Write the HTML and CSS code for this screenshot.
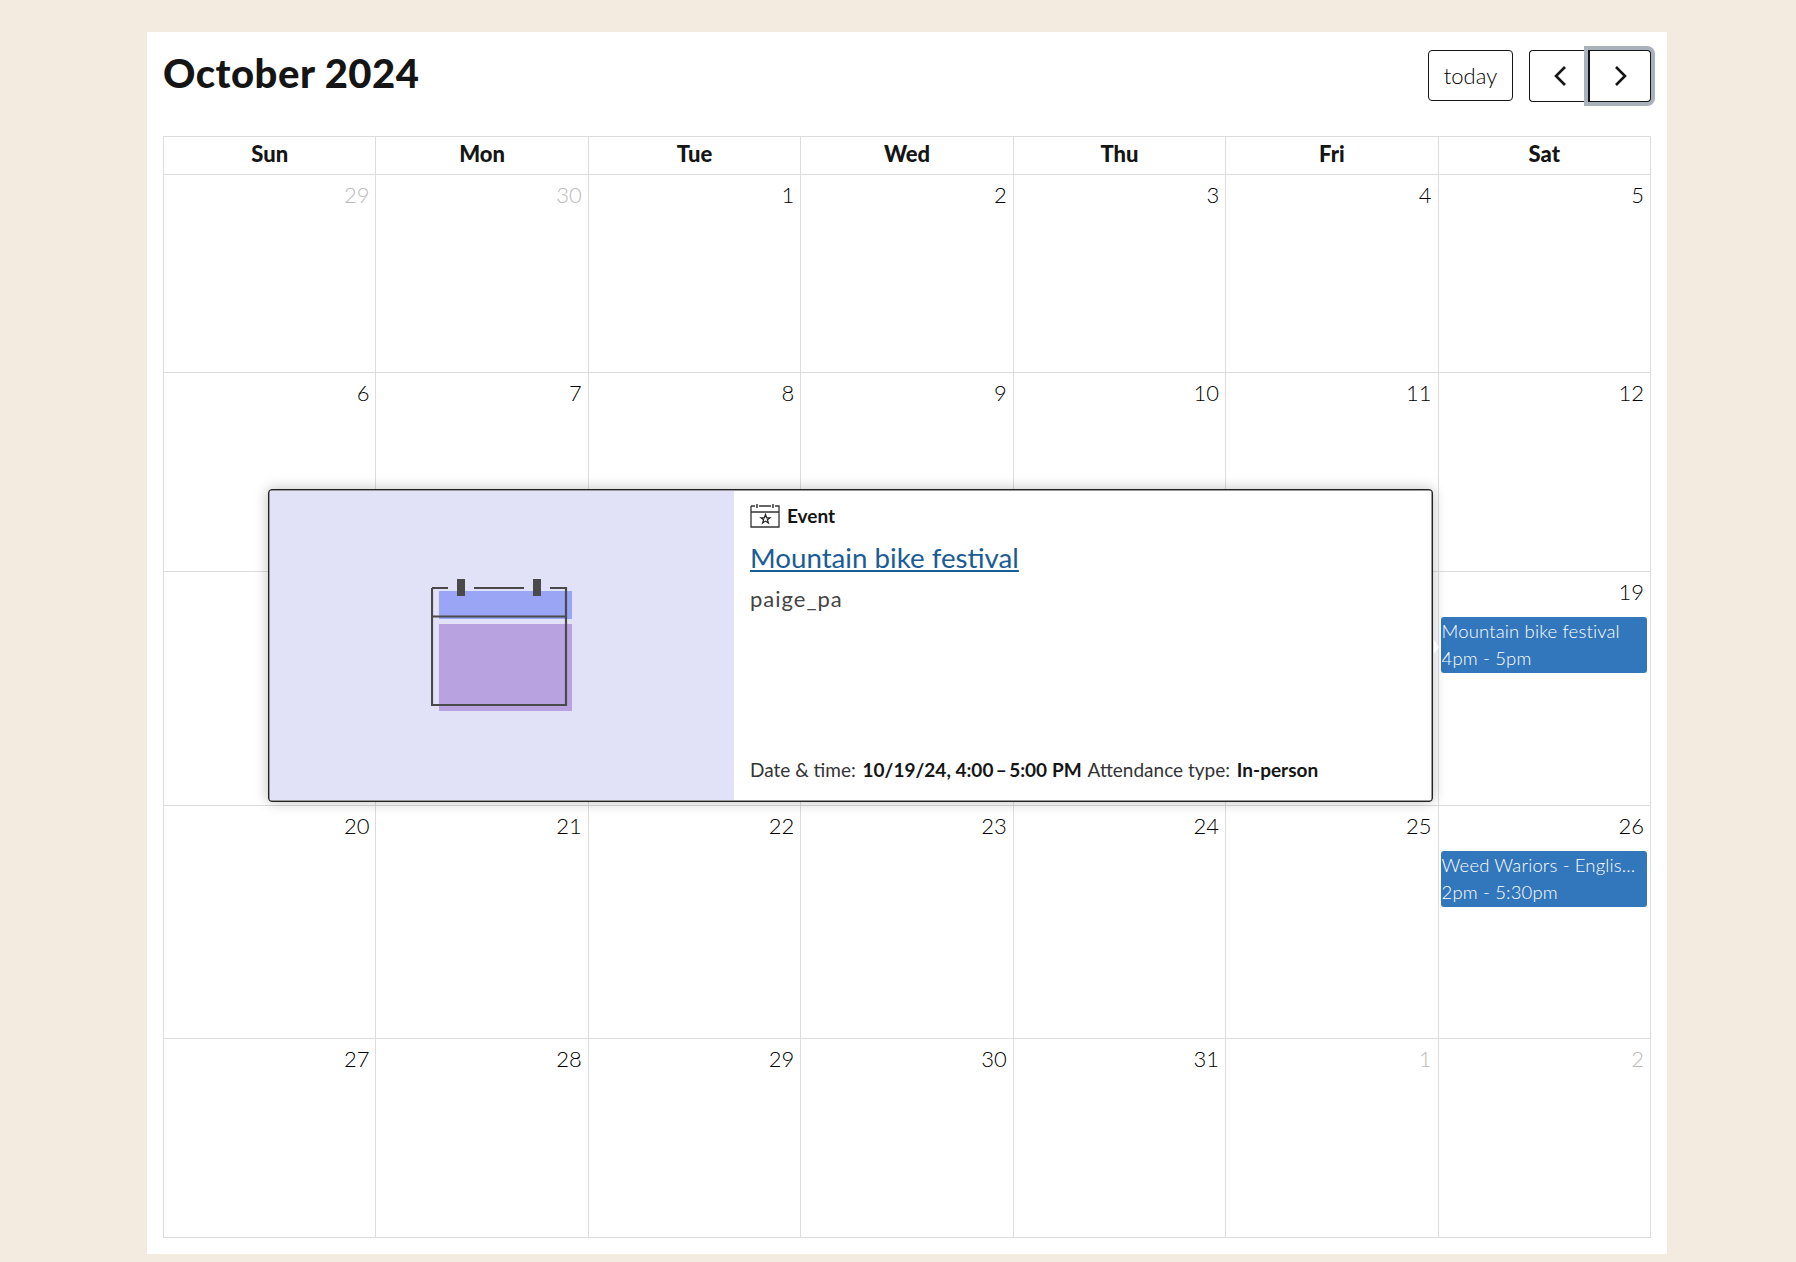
FILE: index.html
```html
<!DOCTYPE html>
<html lang="en">
<head>
    <meta charset="UTF-8">
    <title>Calendar</title>
    <link rel="stylesheet" href="styles.css">
</head>
<body>
    <div class="card">
        <div class="toolbar">
            <h2 class="title">October 2024</h2>
            <div class="actions">
                <button class="btn btn-today">today</button>
                <div class="btn-group">
                    <button class="btn btn-nav btn-prev">
                        <svg width="14" height="22" viewBox="0 0 14 22"><path d="M12 2 L3 11 L12 20" fill="none" stroke="#151515" stroke-width="2.6"/></svg>
                    </button>
                    <button class="btn btn-nav btn-next">
                        <svg width="14" height="22" viewBox="0 0 14 22"><path d="M2 2 L11 11 L2 20" fill="none" stroke="#151515" stroke-width="2.6"/></svg>
                    </button>
                </div>
            </div>
        </div>

        <div class="calendar">
            <div class="head">Sun</div>
            <div class="head">Mon</div>
            <div class="head">Tue</div>
            <div class="head">Wed</div>
            <div class="head">Thu</div>
            <div class="head">Fri</div>
            <div class="head">Sat</div>

            <div class="day other"><span class="num">29</span></div>
            <div class="day other"><span class="num">30</span></div>
            <div class="day"><span class="num">1</span></div>
            <div class="day"><span class="num">2</span></div>
            <div class="day"><span class="num">3</span></div>
            <div class="day"><span class="num">4</span></div>
            <div class="day"><span class="num">5</span></div>

            <div class="day"><span class="num">6</span></div>
            <div class="day"><span class="num">7</span></div>
            <div class="day"><span class="num">8</span></div>
            <div class="day"><span class="num">9</span></div>
            <div class="day"><span class="num">10</span></div>
            <div class="day"><span class="num">11</span></div>
            <div class="day"><span class="num">12</span></div>

            <div class="day"><span class="num">13</span></div>
            <div class="day"><span class="num">14</span></div>
            <div class="day"><span class="num">15</span></div>
            <div class="day"><span class="num">16</span></div>
            <div class="day"><span class="num">17</span></div>
            <div class="day"><span class="num">18</span></div>
            <div class="day"><span class="num">19</span>
                <a class="event">
                    <span class="event-name">Mountain bike festival</span>
                    <span class="event-time">4pm - 5pm</span>
                </a>
            </div>

            <div class="day"><span class="num">20</span></div>
            <div class="day"><span class="num">21</span></div>
            <div class="day"><span class="num">22</span></div>
            <div class="day"><span class="num">23</span></div>
            <div class="day"><span class="num">24</span></div>
            <div class="day"><span class="num">25</span></div>
            <div class="day"><span class="num">26</span>
                <a class="event">
                    <span class="event-name">Weed Wariors - English session</span>
                    <span class="event-time">2pm - 5:30pm</span>
                </a>
            </div>

            <div class="day"><span class="num">27</span></div>
            <div class="day"><span class="num">28</span></div>
            <div class="day"><span class="num">29</span></div>
            <div class="day"><span class="num">30</span></div>
            <div class="day"><span class="num">31</span></div>
            <div class="day other"><span class="num">1</span></div>
            <div class="day other"><span class="num">2</span></div>
        </div>

        <div class="popup">
            <div class="popup-img">
                <svg width="142" height="134" viewBox="0 0 142 134">
                    <rect x="8" y="13" width="133" height="28" fill="#9ba5f5"/>
                    <rect x="8" y="46" width="133" height="87" fill="#b9a2e0"/>
                    <path d="M1 10 H17 M43 10 H93 M119 10 H135 V127 H1 V10 M1 38.500 H135" fill="none" stroke="#4a4a4a" stroke-width="2.200"/>
                    <rect x="26" y="1" width="8" height="17" fill="#4a4a4a"/>
                    <rect x="102" y="1" width="8" height="17" fill="#4a4a4a"/>
                </svg>
            </div>
            <div class="popup-body">
                <div class="popup-type">
                    <svg width="30" height="25" viewBox="0 0 30 25">
                        <path d="M1 3 H5 M9 3 H21 M25 3 H29 V24 H1 V3 M1 9 H29" fill="none" stroke="#333" stroke-width="1.300"/>
                        <path d="M7 1 V5 M23 1 V5" stroke="#333" stroke-width="1.500"/>
                        <polygon points="15.500,11.500 16.700,14.800 20,14.800 17.400,16.800 18.400,20 15.500,18.100 12.600,20 13.600,16.800 11,14.800 14.300,14.800" fill="none" stroke="#222" stroke-width="1.200"/>
                    </svg>
                    <span>Event</span>
                </div>
                <a class="popup-title">Mountain bike festival</a>
                <div class="popup-author">paige_pa</div>
                <div class="popup-meta">
                    <span>Date &amp; time: <b>10/19/24, 4:00&thinsp;–&thinsp;5:00&#8239;PM</b></span>
                    <span>Attendance type: <b>In-person</b></span>
                </div>
            </div>
        </div>
    </div>
</body>
</html>
```

FILE: styles.css
```css
*{
    box-sizing: border-box;
}
body{
    margin: 0;
    background-color: #f3ebdf;
    font-family: "Lato", "Liberation Sans", sans-serif;
    color: #151515;
    padding: 32px 129px 8px 147px;
}
.card{
    position: relative;
    background-color: #fff;
    padding: 16px;
    height: 1222px;
}
.toolbar{
    display: flex;
    justify-content: space-between;
    align-items: flex-start;
    height: 88px;
}
.title{
    margin: 4px 0 0;
    font-size: 40px;
    line-height: 42px;
    font-weight: 900;
    letter-spacing: 0.5px;
    color: #151515;
}
.actions{
    display: flex;
    gap: 16px;
    padding-top: 2px;
}
.btn{
    background: #fff;
    border: 1px solid #151515;
    border-radius: 4px;
    color: #000;
    font-family: inherit;
    font-size: 22px;
    font-weight: 300;
    padding: 0;
    display: flex;
    align-items: center;
    justify-content: center;
}
.btn-today{
    width: 85px;
    height: 51px;
}
.btn-group{
    display: flex;
}
.btn-nav{
    height: 52px;
    padding-left: 2px;
}
.btn-prev{
    width: 59px;
    border-radius: 4px 0 0 4px;
    border-right: 0;
}
.btn-next{
    width: 63px;
    border-radius: 0 4px 4px 0;
    border-left: 2px solid #151515;
    box-shadow: 0 0 0 4px #a9b1bb;
    position: relative;
}
.calendar{
    display: grid;
    grid-template-columns: repeat(7, minmax(0, 1fr));
    grid-template-rows: 38px 198px 199px 234px 233px 199px;
    width: 1488px;
    border-top: 1px solid #ddd;
    border-left: 1px solid #ddd;
}
.head{
    border-right: 1px solid #ddd;
    border-bottom: 1px solid #ddd;
    text-align: center;
    font-weight: 900;
    font-size: 22px;
    line-height: 33px;
}
.day{
    border-right: 1px solid #ddd;
    border-bottom: 1px solid #ddd;
    padding: 6px 3px 0 2px;
    text-align: right;
    font-size: 22px;
    line-height: 28px;
    font-weight: 300;
    color: #000;
}
.num{
    display: block;
    padding-right: 3px;
}
.other{
    color: #bbb;
}
.event{
    display: block;
    margin-top: 11px;
    background-color: #3276bc;
    border-radius: 3px;
    color: #fff;
    text-align: left;
    font-size: 18.5px;
    font-weight: 300;
    letter-spacing: 0.15px;
    line-height: 27px;
    padding: 1px 2px 1px 1px;
}
.event-name,
.event-time{
    display: block;
    white-space: nowrap;
    overflow: hidden;
    text-overflow: ellipsis;
}
.popup{
    position: absolute;
    left: 121px;
    top: 457px;
    width: 1165px;
    height: 313px;
    display: flex;
    padding: 1px;
    background-color: #999;
    border: 1px solid #222;
    border-radius: 4px;
    box-shadow: 0 0 14px rgba(0, 0, 0, 0.25);
}
.popup::after{
    content: "";
    position: absolute;
    right: -7px;
    top: 150px;
    border-left: 5px solid #fff;
    border-top: 7px solid transparent;
    border-bottom: 7px solid transparent;
}
.popup-img{
    width: 464px;
    flex: none;
    padding-bottom: 2px;
    background-color: #e1e1f7;
    display: flex;
    align-items: center;
    justify-content: center;
}
.popup-body{
    flex: 1;
    padding: 12px 16px 19px;
    display: flex;
    flex-direction: column;
    background-color: #fff;
}
.popup-type{
    display: flex;
    align-items: center;
    gap: 7px;
    font-size: 19px;
    font-weight: 700;
}
.popup-title{
    margin-top: 12px;
    font-size: 27.7px;
    line-height: 36px;
    color: #1a5c96;
    text-decoration: underline;
}
.popup-author{
    margin-top: 9px;
    font-size: 22px;
    letter-spacing: 1px;
    color: #444;
}
.popup-meta{
    margin-top: auto;
    display: flex;
    gap: 6px;
    font-size: 19px;
    color: #333;
}
.popup-meta b{
    color: #151515;
    font-weight: 700;
    margin-left: 2px;
}
```
